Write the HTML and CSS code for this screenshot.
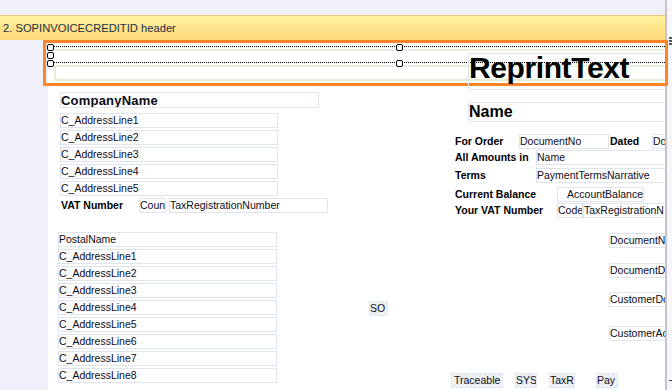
FILE: index.html
```html
<!DOCTYPE html>
<html lang="en">
<head>
  <meta charset="UTF-8">
  <meta name="viewport" content="width=device-width, initial-scale=1.0">
  <title>Report designer</title>
  <link rel="stylesheet" href="styles.css">
</head>
<body>
  <div class="designer">
    <div class="surface">
      <div class="band-gap"></div>
      <div class="band-header">2. SOPINVOICECREDITID header</div>
      <div class="band-body">
        <div class="gutter"></div>
        <div class="page">
          <div class="field reprint">ReprintText</div>
          <div class="field title">Name</div>

          <!-- company address -->
          <div class="stack company">
            <div class="field company-name">CompanyName</div>
            <div class="field line">C_AddressLine1</div>
            <div class="field line">C_AddressLine2</div>
            <div class="field line">C_AddressLine3</div>
            <div class="field line">C_AddressLine4</div>
            <div class="field line">C_AddressLine5</div>
          </div>
          <div class="row vat-row">
            <span class="label vat-label">VAT Number</span>
            <div class="field w27">Coun</div>
            <div class="field w159 gap3">TaxRegistrationNumber</div>
          </div>

          <!-- postal address -->
          <div class="stack postal">
            <div class="field line">PostalName</div>
            <div class="field line">C_AddressLine1</div>
            <div class="field line">C_AddressLine2</div>
            <div class="field line">C_AddressLine3</div>
            <div class="field line">C_AddressLine4</div>
            <div class="field line">C_AddressLine5</div>
            <div class="field line">C_AddressLine6</div>
            <div class="field line">C_AddressLine7</div>
            <div class="field line">C_AddressLine8</div>
          </div>

          <!-- document details -->
          <div class="row info r1">
            <span class="label lw64">For Order</span>
            <div class="field w90">DocumentNo</div>
            <span class="label lw42 gap1">Dated</span>
            <div class="field w80">Do</div>
          </div>
          <div class="row info r2">
            <span class="label lw81">All Amounts in</span>
            <div class="field w150">Name</div>
          </div>
          <div class="row info r3">
            <span class="label lw81">Terms</span>
            <div class="field w150">PaymentTermsNarrative</div>
          </div>
          <div class="row info r4">
            <span class="label lw102">Current Balance</span>
            <div class="field w87 right">AccountBalance</div>
          </div>
          <div class="row info r5">
            <span class="label lw102">Your VAT Number</span>
            <div class="field w26">Code</div>
            <div class="field w100">TaxRegistrationN</div>
          </div>

          <div class="field doc d1">DocumentN</div>
          <div class="field doc d2">DocumentD</div>
          <div class="field doc d3">CustomerDo</div>
          <div class="field doc d4">CustomerAc</div>

          <div class="field hatch so">SO</div>

          <div class="row flags">
            <div class="field hatch w52">Traceable</div>
            <div class="field hatch w22 gap12">SYS</div>
            <div class="field hatch w26 gap12">TaxR</div>
            <div class="field hatch w22 gap21">Pay</div>
          </div>
        </div>
      </div>
    </div>

    <div class="rail">
      <svg class="grip" width="5" height="8" viewBox="0 0 5 8">
        <rect x="0" y="0" width="4" height="2" fill="#555"/>
        <rect x="0" y="3" width="4" height="2" fill="#555"/>
        <rect x="0" y="6" width="4" height="2" fill="#555"/>
      </svg>
      <svg class="dash" width="4" height="2" viewBox="0 0 4 2">
        <rect x="1" y="0" width="3" height="1" fill="#444"/>
      </svg>
    </div>

    <!-- selected band section -->
    <div class="selection">
      <div class="dots d-top"></div>
      <div class="dots d-mid"></div>
      <div class="green-box"></div>
      <span class="handle h1"></span>
      <span class="handle h2"></span>
      <span class="handle h3"></span>
      <span class="handle h4"></span>
      <span class="handle h5"></span>
    </div>
  </div>
</body>
</html>
```

FILE: styles.css
```css
body {
  margin: 0;
  background: #f0f0fa;
  font-family: "Liberation Sans", Arial, Helvetica, sans-serif;
}

.designer {
  position: relative;
  display: flex;
  width: 672px;
  height: 390px;
  overflow: hidden;
}

.surface {
  display: flex;
  flex-direction: column;
  width: 665px;
  height: 390px;
  background: #f0f0fa;
}

.band-gap {
  height: 15px;
}

.band-header {
  box-sizing: border-box;
  height: 25px;
  padding: 5px 0 0 3px;
  border-top: 1px solid #f3c277;
  background: linear-gradient(#fff3a2, #fdd677);
  color: #1d2f3f;
  font-size: 11.2px;
  line-height: 14px;
  white-space: nowrap;
}

.band-body {
  display: flex;
  flex: 1;
}

.gutter {
  width: 48px;
}

.page {
  position: relative;
  flex: 1;
  background: #fff;
  overflow: hidden;
}

.rail {
  position: relative;
  flex: 1;
  box-sizing: border-box;
  border-left: 2px solid #c4c4c8;
  background: #f7f7fb;
}

.grip {
  position: absolute;
  left: 2px;
  top: 37px;
}

.dash {
  position: absolute;
  left: 1px;
  top: 380px;
}

/* fields */
.field {
  box-sizing: border-box;
  height: 15px;
  border: 1px solid #dfe5ef;
  color: #0c0c18;
  font-size: 10.5px;
  line-height: 13px;
  white-space: nowrap;
  overflow: hidden;
  flex-shrink: 0;
}

.label {
  flex-shrink: 0;
  color: #000;
  font-size: 10.5px;
  font-weight: bold;
  line-height: 15px;
  white-space: nowrap;
}

.row {
  position: absolute;
  display: flex;
  align-items: flex-start;
}

.stack {
  position: absolute;
  display: flex;
  flex-direction: column;
  gap: 2px;
}

.company {
  left: 12px;
  top: 52px;
  width: 259px;
}

.company-name {
  height: 16px;
  margin-bottom: 3px;
  padding-top: 0.5px;
  font-size: 13px;
  font-weight: bold;
  line-height: 14px;
  letter-spacing: 0.2px;
}

.company .line {
  width: 218px;
}

.postal {
  left: 10px;
  top: 192px;
  width: 219px;
}

.vat-row {
  left: 13px;
  top: 158px;
}

.vat-label {
  width: 78px;
}

.reprint {
  position: absolute;
  z-index: 3;
  left: 420px;
  top: 13px;
  width: 260px;
  height: 37px;
  font-size: 30px;
  font-weight: bold;
  line-height: 28px;
  letter-spacing: -0.4px;
  color: #000;
}

.title {
  position: absolute;
  left: 420px;
  top: 62px;
  width: 260px;
  height: 20px;
  font-size: 16px;
  font-weight: bold;
  line-height: 18px;
  color: #000;
}

.info { left: 407px; }
.r1 { top: 94px; }
.r2 { top: 110px; }
.r3 { top: 128px; }
.r4 { top: 147px; }
.r5 { top: 163px; }

.lw42 { width: 42px; }
.lw64 { width: 64px; }
.lw81 { width: 81px; }
.lw102 { width: 102px; }

.w22 { width: 22px; }
.w26 { width: 26px; }
.w27 { width: 27px; }
.w52 { width: 52px; }
.w80 { width: 80px; }
.w87 { width: 87px; }
.w90 { width: 90px; }
.w100 { width: 100px; }
.w150 { width: 150px; }
.w159 { width: 159px; }

.gap1 { margin-left: 1px; }
.gap3 { margin-left: 3px; }
.gap12 { margin-left: 12px; }
.gap21 { margin-left: 21px; }

.right {
  text-align: right;
}

.doc {
  position: absolute;
  left: 561px;
  width: 70px;
}
.d1 { top: 193px; }
.d2 { top: 223px; }
.d3 { top: 252px; }
.d4 { top: 286px; }

.hatch {
  border-color: #e4e8f0;
  background: repeating-linear-gradient(135deg, #e2e7f0 0 1px, #f3f5f9 1px 3px);
}

.so {
  position: absolute;
  left: 321px;
  top: 261px;
  width: 19px;
}

.flags {
  left: 403px;
  top: 333px;
}

.flags .w52 {
  padding-left: 2px;
}

/* selection box */
.selection {
  position: absolute;
  left: 43px;
  top: 40px;
  width: 625px;
  height: 46px;
  box-sizing: border-box;
  border: 3px solid #ff8427;
  z-index: 2;
}

.dots {
  position: absolute;
  left: 8px;
  right: 0;
  height: 2px;
  border-top: 1px dotted #000;
  border-bottom: 2px solid #e7f3dd;
}
.d-top { top: 3px; }
.d-mid { top: 19px; }

.green-box {
  position: absolute;
  left: 8px;
  right: 0;
  top: 23px;
  height: 13px;
  border-left: 2px solid #e2efd6;
  border-bottom: 2px solid #e2efd6;
}

.handle {
  position: absolute;
  box-sizing: border-box;
  width: 7px;
  height: 7px;
  border: 1.5px solid #000;
  border-radius: 2px;
  background: #fff;
}
.h1 { left: 1px; top: 1px; }
.h2 { left: 1px; top: 9px; }
.h3 { left: 1px; top: 17px; }
.h4 { left: 350px; top: 1px; }
.h5 { left: 350px; top: 17px; }
```
